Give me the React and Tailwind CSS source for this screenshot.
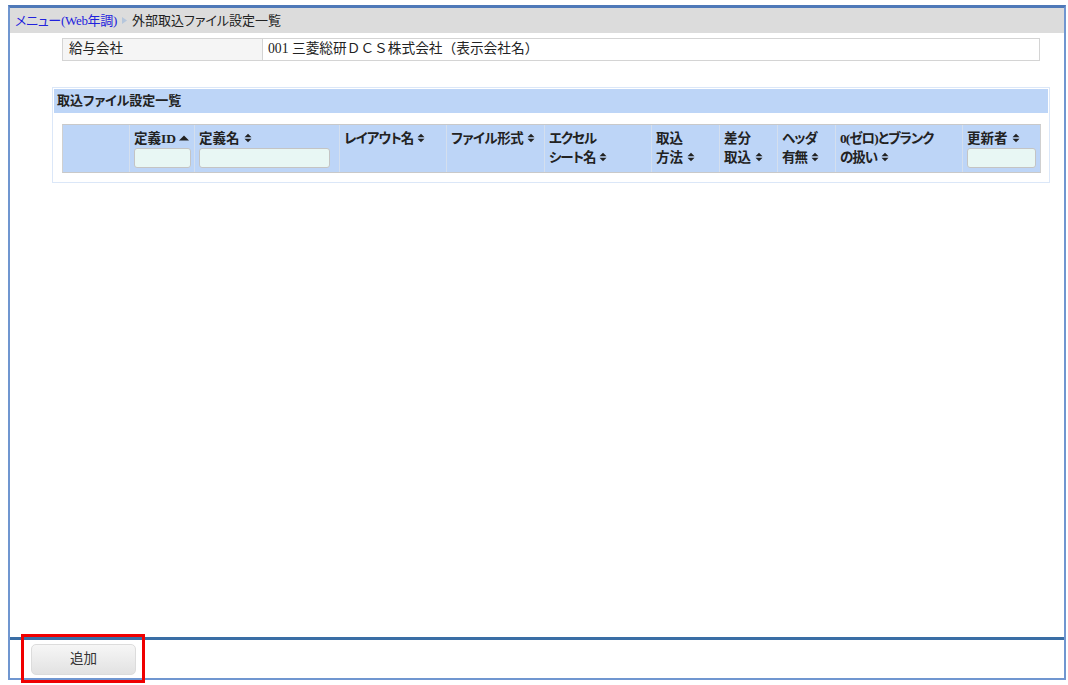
import React from 'react';

const font = { fontFamily: '"Liberation Serif", "Noto Sans CJK JP", sans-serif' };

const SortIcon = ({ asc }) => (
  <svg width="10" height="10" viewBox="0 0 10 10" className="inline-block ml-[3px] align-[0px]" fill="#222">
    {asc ? (
      <path d="M0 7.5 L5 2.5 L10 7.5 Z" />
    ) : (
      <>
        <path d="M1.5 4.2 L5 0.7 L8.5 4.2 Z" />
        <path d="M1.5 5.8 L5 9.3 L8.5 5.8 Z" />
      </>
    )}
  </svg>
);

const columns = [
  { w: 'w-[67px]', lines: [] },
  { w: 'w-[65px]', lines: ['定義ID'], asc: true, input: 'w-[57px]' },
  { w: 'w-[145px]', lines: ['定義名'], input: 'w-[131px]' },
  { w: 'w-[107px]', lines: ['レイアウト名'], track: 'tracking-[-0.9px]' },
  { w: 'w-[98px]', lines: ['ファイル形式'], track: 'tracking-[-0.5px]' },
  { w: 'w-[107px]', lines: ['エクセル', 'シート名'], track: 'tracking-[-1px]' },
  { w: 'w-[68px]', lines: ['取込', '方法'] },
  { w: 'w-[58px]', lines: ['差分', '取込'] },
  { w: 'w-[58px]', lines: ['ヘッダ', '有無'], track: 'tracking-[-1px]' },
  { w: 'w-[127px]', lines: ['0(ゼロ)とブランク', 'の扱い'], track: 'tracking-[-1px]' },
  { w: 'flex-1', lines: ['更新者'], input: 'w-[69px]' },
];

export default function App() {
  return (
    <div className="h-[685px] w-[1068px] bg-white pt-[5px] pl-[8px] pr-[2px] pb-[5px] text-[#222] [font-feature-settings:'palt']" style={font}>
      <div className="h-full flex flex-col border-x-2 border-b-2 border-x-[#7096d0] border-b-[#7096d0] border-t-[3px] border-t-[#4f79b8]">
        {/* breadcrumb */}
        <div className="h-[25px] shrink-0 bg-[#dcdcdc] flex items-center pl-[5px] text-[13px] leading-none">
          <a className="text-[#2222dd] tracking-[-0.3px]">メニュー(Web年調)</a>
          <svg width="5" height="7" viewBox="0 0 5 7" className="mx-[5px]" fill="#b5c6dc">
            <path d="M0 0 L5 3.5 L0 7 Z" />
          </svg>
          <span>外部取込ファイル設定一覧</span>
        </div>

        <div className="flex-1 min-h-0 pl-[42px] pr-[14px]">
          {/* company row */}
          <div className="mx-[10px] mt-[5px] h-[23px] flex border border-[#d4d4d4] text-[13.5px]">
            <div className="w-[200px] bg-[#f5f5f5] border-r border-[#d4d4d4] pl-[6px] flex items-center">給与会社</div>
            <div className="flex-1 pl-[5px] flex items-center [font-feature-settings:normal] text-[13.7px]">001 三菱総研ＤＣＳ株式会社（表示会社名）</div>
          </div>

          {/* list section */}
          <div className="mt-[26px] h-[96px] border border-[#dbe7f8] p-[1px]">
            <div className="h-[24px] bg-[#bdd5f7] pl-[3px] flex items-center text-[13px] font-bold">取込ファイル設定一覧</div>
            <div className="ml-[8px] mr-[7px] mt-[11px] h-[49px] flex bg-[#bdd5f7] border-y border-[#c9c9c9] border-x border-x-[#d0d0d0] text-[13.5px] font-bold leading-[19px]">
              {columns.map((col, i) => (
                <div key={i} className={`${col.w} shrink-0 pl-[4px] pt-[4px] border-r border-[#d4dfee] last:border-r-0`}>
                  {col.lines.map((line, j) => (
                    <div key={j} className="whitespace-nowrap">
                      <span className={col.track}>{line}</span>
                      {j === col.lines.length - 1 && <SortIcon asc={col.asc} />}
                    </div>
                  ))}
                  {col.input && (
                    <input className={`${col.input} block h-[20px] bg-[#e8f7f4] border border-[#c4c4c4] rounded-[3px]`} />
                  )}
                </div>
              ))}
            </div>
          </div>
        </div>

        {/* footer */}
        <div className="h-[41px] shrink-0 border-t-[3px] border-[#3a6ea5] flex items-center pl-[21px]">
          <button className="relative w-[105px] h-[31px] pt-[1px] rounded-[5px] border border-[#dcdcdc] bg-gradient-to-b from-[#f6f6f6] to-[#e2e2e2] text-[13.5px] text-[#333]">
            追加
            <span className="absolute left-[-11px] top-[-11px] w-[124px] h-[49px] border-[3px] border-[#f00000]" />
          </button>
        </div>
      </div>
    </div>
  );
}
